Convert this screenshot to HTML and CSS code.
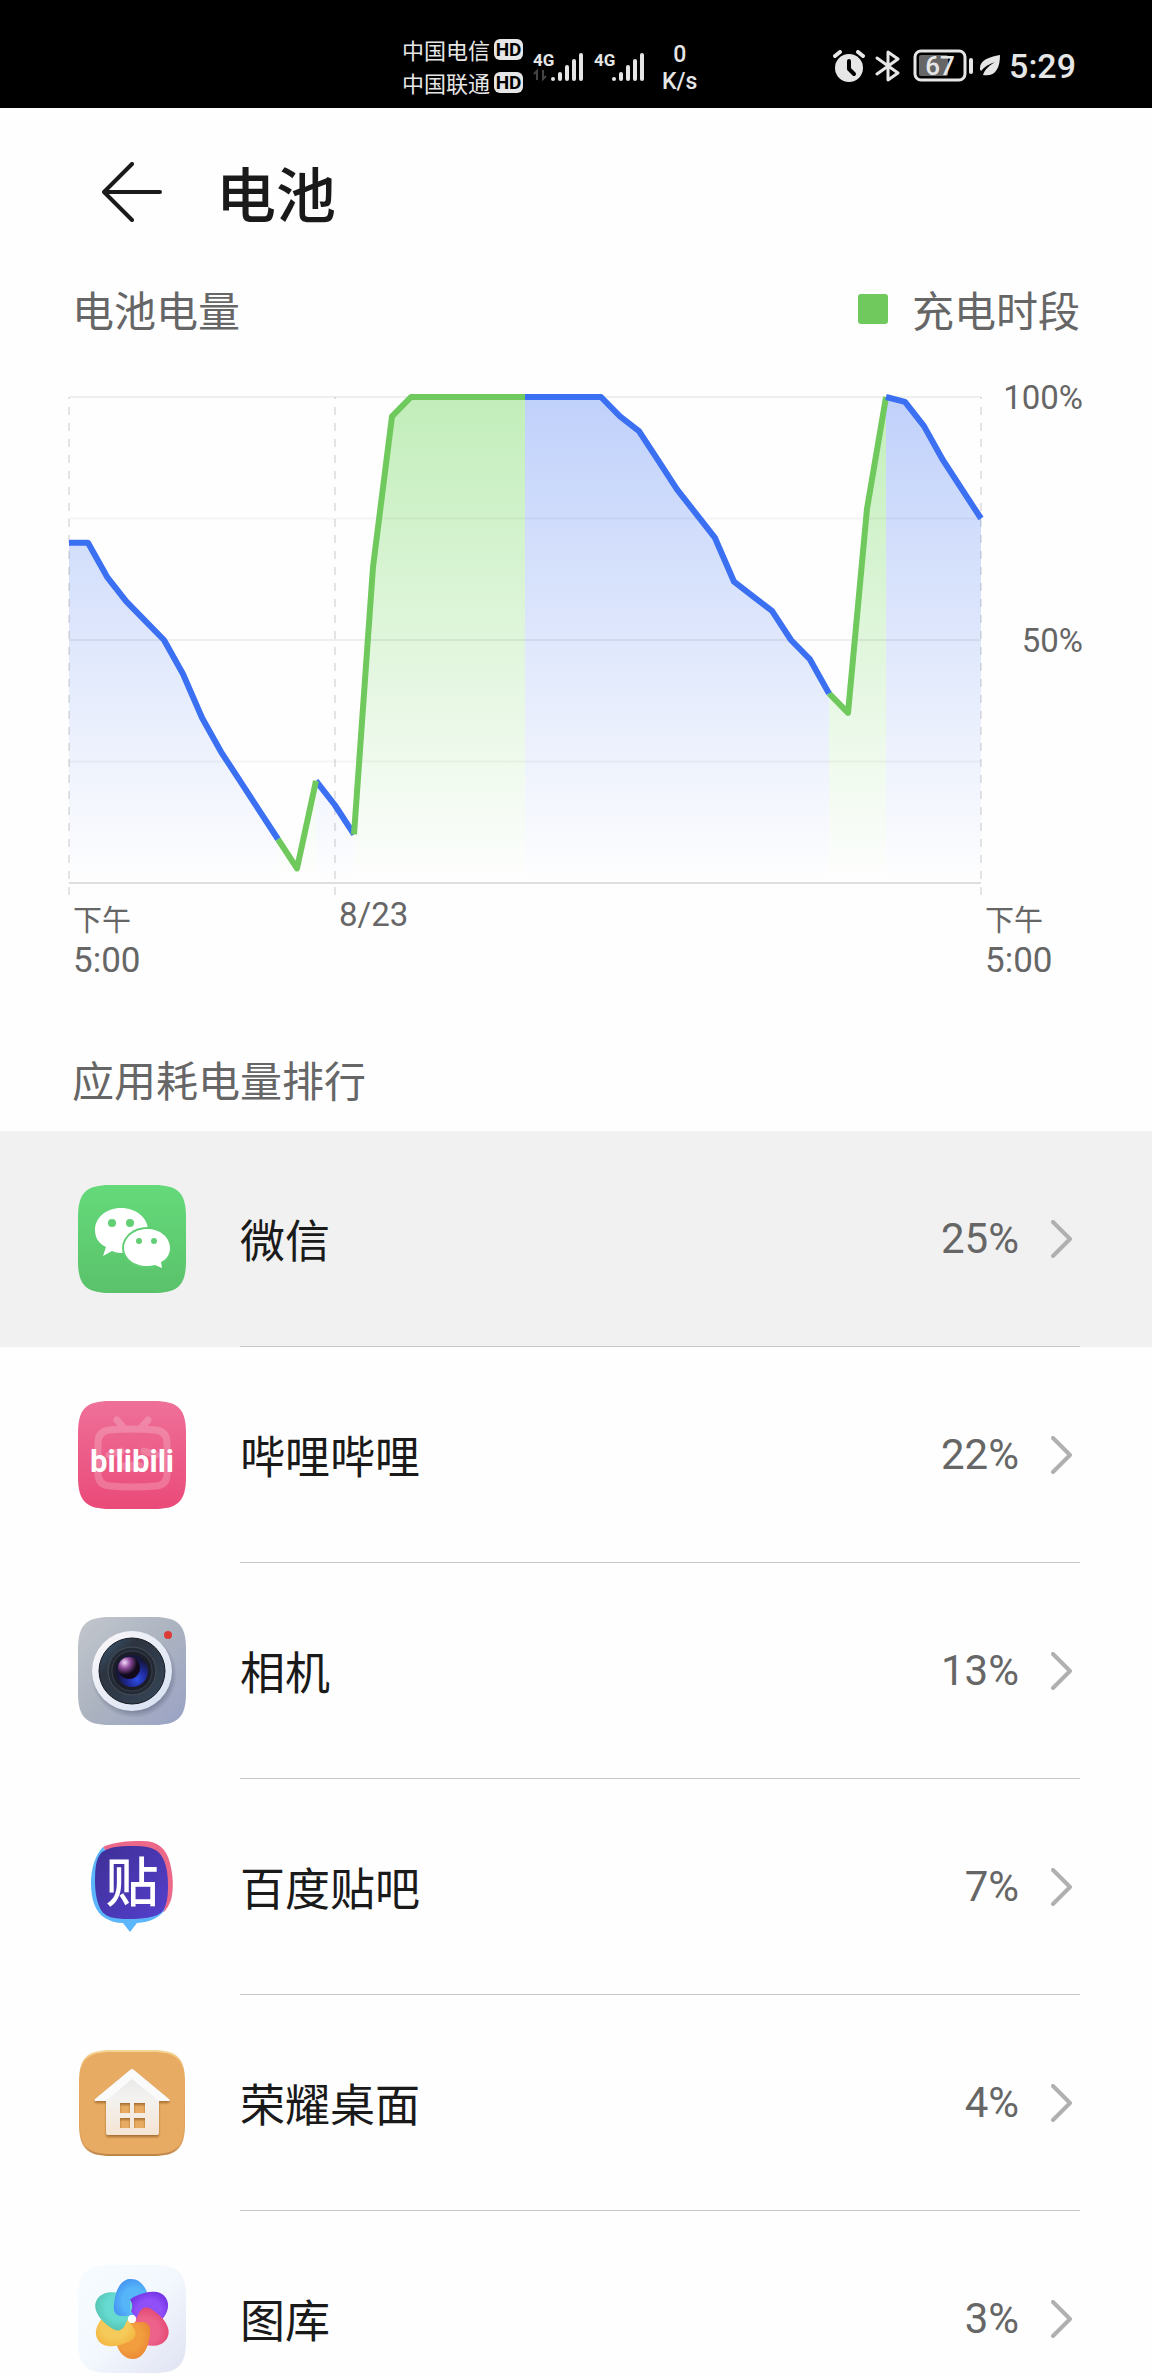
FILE: index.html
```
<!DOCTYPE html>
<html lang="zh-CN">
  <head>
    <meta charset="UTF-8" />
    <meta name="viewport" content="width=device-width, initial-scale=1.0" />
    <title>电池</title>
    <link rel="stylesheet" href="styles.css">
  </head>
  <body>
    <div class="status-bar">
      <div class="status-left">
        <div class="carriers">
          <div class="carrier">中国电信 <span class="hd">HD</span></div>
          <div class="carrier">中国联通 <span class="hd">HD</span></div>
        </div>
        <div class="signals">
          <svg class="signal" width="52" height="36" viewBox="0 0 52 36">
            <text class="net" x="0" y="18">4G</text>
            <path class="data" d="M1 26l3-3v9M10 22v9l3-3" />
            <path class="bars" d="M20 31v0M27 26v5M34 19v12M41 13v18M48 7v24" />
          </svg>
          <svg class="signal" width="52" height="36" viewBox="0 0 52 36">
            <text class="net" x="0" y="18">4G</text>
            <path class="bars" d="M20 31v0M27 26v5M34 19v12M41 13v18M48 7v24" />
          </svg>
        </div>
        <div class="speed"><span>0</span><span>K/s</span></div>
      </div>
      <div class="status-right">
        <svg width="32" height="32" viewBox="0 0 32 32">
          <circle cx="16" cy="18" r="14" fill="#e6e6e6" />
          <path d="M2 6l5-4M30 6l-5-4" stroke="#e6e6e6" stroke-width="4" stroke-linecap="round" />
          <path d="M16 11v8l5 5" fill="none" stroke="#000" stroke-width="4" stroke-linecap="round" stroke-linejoin="round" />
        </svg>
        <svg width="26" height="32" viewBox="0 0 26 32">
          <path d="M2 8l21 15-10 7V2l10 7L2 24" fill="none" stroke="#e6e6e6" stroke-width="3" stroke-linecap="round" stroke-linejoin="round" />
        </svg>
        <svg class="battery" width="62" height="34" viewBox="0 0 62 34">
          <rect x="2" y="2" width="50" height="29" rx="6" fill="none" stroke="#e6e6e6" stroke-width="3" />
          <rect x="6" y="6" width="29" height="21" rx="2" fill="#666" />
          <rect x="56" y="9" width="4" height="16" rx="2" fill="#e6e6e6" />
          <text x="27" y="26" text-anchor="middle">67</text>
        </svg>
        <svg class="leaf" width="22" height="24" viewBox="0 0 22 24">
          <path d="M21 1C10 3 1 6 1 14c0 1 0 2 1 3 3-4 8-7 14-9-5 3-10 7-12 13C16 23 21 15 21 1z" fill="#e6e6e6" />
        </svg>
        <span class="clock">5:29</span>
      </div>
    </div>

    <header class="toolbar">
      <button class="back" type="button" aria-label="返回">
        <svg width="60" height="60" viewBox="0 0 60 60">
          <path d="M30 2L2 30l28 28M2 30h56" />
        </svg>
      </button>
      <h1>电池</h1>
    </header>

    <section class="level">
      <div class="level-head">
        <h2>电池电量</h2>
        <div class="legend"><span class="swatch"></span>充电时段</div>
      </div>

      <div class="chart">
        <!-- one x unit = half an hour, one y unit = 1% -->
        <svg class="plot" viewBox="0 0 48 100" preserveAspectRatio="none">
          <defs>
            <linearGradient id="useFill" gradientUnits="userSpaceOnUse" x1="0" y1="0" x2="0" y2="100">
              <stop offset="0" stop-color="#3b70f2" stop-opacity=".32" />
              <stop offset="1" stop-color="#3b70f2" stop-opacity="0" />
            </linearGradient>
            <linearGradient id="chargeFill" gradientUnits="userSpaceOnUse" x1="0" y1="0" x2="0" y2="100">
              <stop offset="0" stop-color="#6fd75c" stop-opacity=".42" />
              <stop offset="1" stop-color="#6fd75c" stop-opacity="0" />
            </linearGradient>
          </defs>

          <g fill="url(#useFill)">
            <path d="M0 100V30H1L2 37 3 42 4 46 5 50 6 57 7 66 8 73 9 79 10 85 11 91V100z" />
            <path d="M13 100V79L14 84 15 90V100z" />
            <path d="M24 100V0H28L29 4 30 7 31 13 32 19 33 24 34 29 35 38 36 41 37 44 38 50 39 54 40 61V100z" />
            <path d="M43 100V0L44 1 45 6 46 13 47 19 48 25V100z" />
          </g>
          <g fill="url(#chargeFill)">
            <path d="M11 100V91L12 97 13 79V100z" />
            <path d="M15 100V90L16 35 17 4 18 0H24V100z" />
            <path d="M40 100V61L41 65 42 23 43 0V100z" />
          </g>

          <path class="grid" d="M0 0H48M0 50H48" />
          <path class="grid minor" d="M0 25H48M0 75H48" />
          <path class="grid base" d="M0 100H48" />
          <path class="grid dashed" d="M0 0V102.5M14 0V102.5M48 0V102.5" />

          <g class="line use">
            <path d="M0 30H1L2 37 3 42 4 46 5 50 6 57 7 66 8 73 9 79 10 85 11 91" />
            <path d="M13 79L14 84 15 90" />
          </g>
          <g class="line charge">
            <path d="M11 91L12 97 13 79" />
            <path d="M15 90L16 35 17 4 18 0H24" />
            <path d="M40 61L41 65 42 23 43 0" />
          </g>
          <g class="line use">
            <path d="M24 0H28L29 4 30 7 31 13 32 19 33 24 34 29 35 38 36 41 37 44 38 50 39 54 40 61" />
            <path d="M43 0L44 1 45 6 46 13 47 19 48 25" />
          </g>
        </svg>
        <div class="y-axis"><span>100%</span><span>50%</span></div>
        <div class="x-label"><small>下午</small><span class="hour">5:00</span></div>
        <div class="x-label">8/23</div>
        <div class="x-label"><small>下午</small><span class="hour">5:00</span></div>
      </div>
    </section>

    <section class="ranking">
      <h2>应用耗电量排行</h2>
      <ul>
        <li>
          <a class="app pressed" href="#wechat">
            <svg class="icon" viewBox="0 0 108 108">
              <defs>
                <path id="tile" d="M0 32C0 8 8 0 32 0H76C100 0 108 8 108 32V76C108 100 100 108 76 108H32C8 108 0 100 0 76z" />
                <linearGradient id="wechatBg" x1="0" y1="0" x2="0" y2="1">
                  <stop offset="0" stop-color="#65da7a" />
                  <stop offset="1" stop-color="#5ac26b" />
                </linearGradient>
              </defs>
              <use href="#tile" fill="url(#wechatBg)" />
              <path d="M43 23C58 23 70 33 70 45S58 68 43 68Q38 68 34 66L25 71 28 62C20 58 17 52 17 45 17 33 28 23 43 23z" fill="#fff" />
              <ellipse cx="69" cy="63" rx="25" ry="21" fill="#5fcd72" />
              <path d="M69 44C82 44 92 52 92 63 92 69 89 74 83 77L84 83 77 80Q73 81 69 81C56 81 46 73 46 63S56 44 69 44z" fill="#fff" />
              <g fill="#61cf74">
                <circle cx="34" cy="38" r="4" />
                <circle cx="52" cy="38" r="4" />
                <circle cx="61" cy="56" r="3" />
                <circle cx="76" cy="56" r="3" />
              </g>
            </svg>
            <span class="row">
              <span class="name">微信</span>
              <span class="percent">25%</span>
              <svg class="chevron" viewBox="0 0 22 38"><path d="M2 2l17 17L2 36" /></svg>
            </span>
          </a>
        </li>
        <li>
          <a class="app" href="#bilibili">
            <svg class="icon" viewBox="0 0 108 108">
              <defs>
                <linearGradient id="biliBg" x1="0" y1="0" x2="0" y2="1">
                  <stop offset="0" stop-color="#ee7099" />
                  <stop offset="1" stop-color="#ea4a78" />
                </linearGradient>
              </defs>
              <use href="#tile" fill="url(#biliBg)" />
              <g fill="none" stroke="#fff" stroke-width="7" opacity=".2">
                <path d="M32 29Q55 27 77 29 89 30 89 42V73Q89 84 78 85 55 87 32 85 20 84 20 73V42Q20 30 32 29z" />
                <path d="M39 19l6 7M70 19l-6 7M31 54l12-4M66 50l12 4M46 65q4 4 8 0 4 4 8 0" stroke-linecap="round" />
              </g>
              <text class="bili" x="54" y="71" text-anchor="middle">bilibili</text>
            </svg>
            <span class="row">
              <span class="name">哔哩哔哩</span>
              <span class="percent">22%</span>
              <svg class="chevron" viewBox="0 0 22 38"><path d="M2 2l17 17L2 36" /></svg>
            </span>
          </a>
        </li>
        <li>
          <a class="app" href="#camera">
            <svg class="icon" viewBox="0 0 108 108">
              <defs>
                <linearGradient id="camBg" x1="0" y1="0" x2="1" y2="1">
                  <stop offset="0" stop-color="#c3c7cd" />
                  <stop offset=".5" stop-color="#abb3c0" />
                  <stop offset="1" stop-color="#9aa2c6" />
                </linearGradient>
                <linearGradient id="camRing" x1="0" y1="0" x2="1" y2="1">
                  <stop offset="0" stop-color="#fbf8fa" />
                  <stop offset="1" stop-color="#d5e0f2" />
                </linearGradient>
                <linearGradient id="camGlass" x1="0" y1="0" x2="1" y2="1">
                  <stop offset="0" stop-color="#3c5f7d" />
                  <stop offset=".3" stop-color="#2d3440" />
                  <stop offset="1" stop-color="#354658" />
                </linearGradient>
                <radialGradient id="camShadow">
                  <stop offset=".8" stop-color="#59617a" stop-opacity=".6" />
                  <stop offset="1" stop-color="#59617a" stop-opacity="0" />
                </radialGradient>
                <radialGradient id="camBlue" cx=".65" cy=".75" r=".6">
                  <stop offset="0" stop-color="#2f4fe8" />
                  <stop offset=".5" stop-color="#1f2a98" />
                  <stop offset="1" stop-color="#15163a" />
                </radialGradient>
                <radialGradient id="camPink" cx=".3" cy=".25" r=".75">
                  <stop offset="0" stop-color="#f4d9fb" />
                  <stop offset=".35" stop-color="#8f4b9c" />
                  <stop offset=".75" stop-color="#120a1c" />
                </radialGradient>
              </defs>
              <use href="#tile" fill="url(#camBg)" />
              <circle cx="56" cy="58" r="43" fill="url(#camShadow)" />
              <circle cx="54" cy="54" r="40" fill="url(#camRing)" />
              <circle cx="54" cy="54" r="33" fill="url(#camGlass)" stroke="#14181f" />
              <circle cx="54" cy="54" r="24" fill="#252b35" stroke="#464f5b" />
              <circle cx="54" cy="54" r="20" fill="#1b1e29" stroke="#39404d" />
              <circle cx="54" cy="54" r="16" fill="url(#camBlue)" />
              <circle cx="51" cy="51" r="11" fill="url(#camPink)" />
              <circle cx="90" cy="18" r="4" fill="#dc3a34" />
            </svg>
            <span class="row">
              <span class="name">相机</span>
              <span class="percent">13%</span>
              <svg class="chevron" viewBox="0 0 22 38"><path d="M2 2l17 17L2 36" /></svg>
            </span>
          </a>
        </li>
        <li>
          <a class="app" href="#tieba">
            <svg class="icon" viewBox="0 0 108 108">
              <defs>
                <linearGradient id="tiebaBg" x1="0" y1="0" x2="1" y2="1">
                  <stop offset="0" stop-color="#3d2f96" />
                  <stop offset="1" stop-color="#5440cd" />
                </linearGradient>
              </defs>
              <path d="M25 14C36 9 48 8 64 8 80 8 88 15 92 30 95 42 96 55 93 67 91 72 89 76 86 79L50 50z" fill="#ec6888" />
              <path d="M25 14C17 22 13 36 13 50 13 66 17 79 27 85 32 88 38 90 45 90L52 99 59 90C72 89 82 85 87 76L50 50z" fill="#5cb6fb" />
              <path d="M23 20C30 14 40 13 53 13 68 13 77 14 83 22 89 31 90 42 90 54 90 66 88 74 84 79 77 85 64 86 50 86 36 86 27 84 23 77 19 70 17 60 17 48 17 35 18 26 23 20z" fill="url(#tiebaBg)" />
              <text class="tie" x="54" y="69" text-anchor="middle">贴</text>
            </svg>
            <span class="row">
              <span class="name">百度贴吧</span>
              <span class="percent">7%</span>
              <svg class="chevron" viewBox="0 0 22 38"><path d="M2 2l17 17L2 36" /></svg>
            </span>
          </a>
        </li>
        <li>
          <a class="app" href="#launcher">
            <svg class="icon" viewBox="0 0 108 108">
              <defs>
                <linearGradient id="houseEdge" x1="0" y1="0" x2="0" y2="1">
                  <stop offset="0" stop-color="#f6d795" />
                  <stop offset=".2" stop-color="#e7aa62" />
                  <stop offset=".9" stop-color="#e0a05a" />
                  <stop offset="1" stop-color="#b9834a" />
                </linearGradient>
                <linearGradient id="houseBody" x1="0" y1="0" x2="0" y2="1">
                  <stop offset="0" stop-color="#e6e6e6" />
                  <stop offset=".4" stop-color="#f3f2f0" />
                  <stop offset="1" stop-color="#f5e4d3" />
                </linearGradient>
                <filter id="houseShadow" x="-20%" y="-20%" width="140%" height="140%">
                  <feDropShadow dx="0" dy="2" stdDeviation="1" flood-color="#7a4a15" flood-opacity=".6" />
                </filter>
              </defs>
              <path d="M1 33C1 9 9 1 33 1H75C99 1 107 9 107 33V75C107 99 99 107 75 107H33C9 107 1 99 1 75z" fill="url(#houseEdge)" />
              <path d="M2 33C2 11 10 3 33 3H75C98 3 106 11 106 33V74C106 97 98 105 75 105H33C10 105 2 97 2 74z" fill="#e8ab63" />
              <g filter="url(#houseShadow)">
                <path d="M28 44L54 24 81 44V84q0 2-2 2H30q-2 0-2-2zM42 54v10h10V54zM56 54v10h11V54zM42 69v10h10V69zM56 69v10h11V69z" fill="url(#houseBody)" fill-rule="evenodd" />
                <path d="M52 21q2-2 4 0L91 50q2 2-1 2H81L54 30 28 52H18q-2 0-1-2z" fill="#fafafa" />
              </g>
            </svg>
            <span class="row">
              <span class="name">荣耀桌面</span>
              <span class="percent">4%</span>
              <svg class="chevron" viewBox="0 0 22 38"><path d="M2 2l17 17L2 36" /></svg>
            </span>
          </a>
        </li>
        <li>
          <a class="app" href="#gallery">
            <svg class="icon" viewBox="0 0 108 108">
              <defs>
                <linearGradient id="galleryBg" x1="0" y1="0" x2="1" y2="1">
                  <stop offset="0" stop-color="#f6fcff" />
                  <stop offset=".5" stop-color="#f3f8fe" />
                  <stop offset="1" stop-color="#e0e2f2" />
                </linearGradient>
                <path id="petal" d="M53 14C61 14 67 20 70 30 73 40 69 48 62 49 56 50 50 51 43 51 37 50 35 46 36 39 37 26 43 14 53 14z" />
                <clipPath id="leftHalf"><rect x="30" y="10" width="22" height="44" /></clipPath>
                <radialGradient id="petalBlue" cx=".6" cy=".6" r=".7">
                  <stop offset=".5" stop-color="#55b5f8" />
                  <stop offset="1" stop-color="#428df2" />
                </radialGradient>
                <radialGradient id="petalPurple" cx=".6" cy=".6" r=".7">
                  <stop offset=".5" stop-color="#904ff7" />
                  <stop offset="1" stop-color="#6a2be0" />
                </radialGradient>
                <radialGradient id="petalPink" cx=".6" cy=".6" r=".7">
                  <stop offset=".5" stop-color="#ec628b" />
                  <stop offset="1" stop-color="#e2446c" />
                </radialGradient>
                <radialGradient id="petalOrange" cx=".6" cy=".6" r=".7">
                  <stop offset=".5" stop-color="#f29e3f" />
                  <stop offset="1" stop-color="#e98433" />
                </radialGradient>
                <radialGradient id="petalYellow" cx=".6" cy=".6" r=".7">
                  <stop offset=".5" stop-color="#f5ca5a" />
                  <stop offset="1" stop-color="#f3b23c" />
                </radialGradient>
                <radialGradient id="petalTeal" cx=".6" cy=".6" r=".7">
                  <stop offset=".5" stop-color="#66dad0" />
                  <stop offset="1" stop-color="#52c0ae" />
                </radialGradient>
              </defs>
              <use href="#tile" fill="url(#galleryBg)" />
              <use href="#petal" fill="url(#petalBlue)" />
              <use href="#petal" fill="url(#petalPurple)" transform="rotate(60 54 54)" />
              <use href="#petal" fill="url(#petalPink)" transform="rotate(120 54 54)" />
              <use href="#petal" fill="url(#petalOrange)" transform="rotate(180 54 54)" />
              <use href="#petal" fill="url(#petalYellow)" transform="rotate(240 54 54)" />
              <use href="#petal" fill="url(#petalTeal)" transform="rotate(300 54 54)" />
              <g clip-path="url(#leftHalf)"><use href="#petal" fill="url(#petalBlue)" /></g>
              <circle cx="54" cy="54" r="4" fill="#fff" />
            </svg>
            <span class="row">
              <span class="name">图库</span>
              <span class="percent">3%</span>
              <svg class="chevron" viewBox="0 0 22 38"><path d="M2 2l17 17L2 36" /></svg>
            </span>
          </a>
        </li>
      </ul>
    </section>
  </body>
</html>
```

FILE: styles.css
```
* {
  margin: 0;
  padding: 0;
  box-sizing: border-box;
}

body {
  display: flex;
  flex-direction: column;
  height: 100vh;
  overflow: hidden;
  background: #fefefe;
  color: #1a1a1a;
  font-family: Roboto, "Noto Sans CJK SC", sans-serif;
}

svg {
  display: block;
  flex: none;
}

h1,
h2,
.legend,
.carrier,
.name,
small {
  font-family: "Noto Sans CJK SC", sans-serif;
}

h1 {
  font-size: 60px;
  line-height: 80px;
  font-weight: 500;
}

h2,
.legend {
  font-size: 42px;
  line-height: 60px;
  font-weight: 400;
  color: #666;
}

/* ---------- status bar ---------- */

.status-bar {
  display: flex;
  flex: none;
  justify-content: space-between;
  align-items: center;
  height: 108px;
  padding: 24px 76px 0 402px;
  background: #000;
  color: #e6e6e6;
}

.status-left,
.status-right,
.signals {
  display: flex;
  align-items: center;
}

.carrier {
  display: flex;
  align-items: center;
  gap: 4px;
  font-size: 22px;
  line-height: 33px;
}

.hd {
  width: 29px;
  height: 21px;
  border-radius: 6px;
  background: #e6e6e6;
  color: #000;
  font-family: Roboto, sans-serif;
  font-size: 19px;
  line-height: 21px;
  font-weight: 700;
  text-align: center;
}

.signals {
  gap: 9px;
  margin-left: 10px;
}

.net {
  font-size: 17px;
  font-weight: 700;
  fill: #e6e6e6;
}

.bars {
  fill: none;
  stroke: #e6e6e6;
  stroke-width: 4;
  stroke-linecap: round;
}

.data {
  fill: none;
  stroke: #444;
  stroke-width: 2;
}

.speed {
  display: flex;
  flex-direction: column;
  margin-left: 16px;
  padding-top: 4px;
  font-size: 23px;
  line-height: 27px;
  font-weight: 500;
  text-align: center;
}

.status-right {
  gap: 10px;
}

.battery {
  margin-left: 2px;
  margin-right: -6px;
}

.leaf {
  margin-right: -2px;
}

.battery text {
  font-size: 26px;
  font-weight: 500;
  fill: #e6e6e6;
}

.clock {
  font-size: 34px;
  line-height: 40px;
  font-weight: 500;
}

/* ---------- toolbar ---------- */

.toolbar {
  display: flex;
  flex: none;
  align-items: center;
  gap: 54px;
  height: 168px;
  padding: 0 102px;
}

.back {
  border: none;
  background: none;
}

.back path {
  fill: none;
  stroke: #1a1a1a;
  stroke-width: 4;
  stroke-linecap: round;
  stroke-linejoin: round;
}

/* ---------- battery level ---------- */

.level {
  flex: none;
}

.level-head {
  display: flex;
  justify-content: space-between;
  align-items: center;
  height: 66px;
  padding: 0 72px;
}

.legend {
  display: flex;
  align-items: center;
  gap: 24px;
}

.swatch {
  width: 30px;
  height: 30px;
  border-radius: 3px;
  background: #6fc95c;
}

/* the first two columns meet at midnight */
.chart {
  display: grid;
  grid-template-columns: 14fr 34fr 102px;
  grid-template-rows: 486px auto;
  padding: 55px 69px 48px;
  color: #666;
  font-size: 33px;
  line-height: 40px;
}

.plot {
  grid-column: 1 / 3;
  width: 100%;
  height: 100%;
  overflow: visible;
}

.plot path {
  vector-effect: non-scaling-stroke;
}

.line path {
  fill: none;
  stroke-width: 6;
  stroke-linejoin: round;
}

.use path {
  stroke: #3b70f2;
}

.charge path {
  stroke: #6fc95c;
}

.grid {
  fill: none;
  stroke: rgba(0, 0, 0, 0.06);
  stroke-width: 2;
}

.minor {
  stroke: rgba(0, 0, 0, 0.04);
}

.base {
  stroke: rgba(0, 0, 0, 0.12);
}

.dashed {
  stroke: rgba(0, 0, 0, 0.1);
  stroke-dasharray: 8;
  stroke-dashoffset: 6;
}

.y-axis {
  display: grid;
  grid-template-rows: 1fr 1fr;
  margin-top: -19px;
  margin-bottom: 19px;
  text-align: right;
}

.x-label {
  display: flex;
  flex-direction: column;
  padding: 12px 0 0 4px;
}

.x-label small {
  font-size: 29px;
  line-height: 46px;
}

.hour {
  font-size: 35px;
}

/* ---------- app ranking ---------- */

.ranking h2 {
  padding: 20px 72px 22px;
}

.ranking ul {
  list-style: none;
}

.app {
  display: flex;
  align-items: center;
  gap: 54px;
  padding: 0 72px 0 78px;
  color: inherit;
  text-decoration: none;
}

.pressed {
  background: #f1f1f1;
}

.icon {
  width: 108px;
  height: 108px;
}

.bili {
  font-size: 31px;
  font-weight: 700;
  fill: #fff;
}

.tie {
  font-family: "Noto Sans CJK SC", sans-serif;
  font-size: 53px;
  font-weight: 500;
  fill: #fff;
}

.row {
  display: flex;
  flex: 1;
  align-items: center;
  height: 216px;
  padding-right: 7px;
  border-bottom: 1px solid #c6c6c6;
}

.name {
  flex: 1;
  font-size: 45px;
  line-height: 60px;
}

.percent {
  margin-right: 32px;
  color: #666;
  font-size: 42px;
  line-height: 60px;
}

.chevron {
  width: 22px;
  height: 38px;
}

.chevron path {
  fill: none;
  stroke: #b0b0b0;
  stroke-width: 4;
  stroke-linecap: round;
  stroke-linejoin: round;
}
```
